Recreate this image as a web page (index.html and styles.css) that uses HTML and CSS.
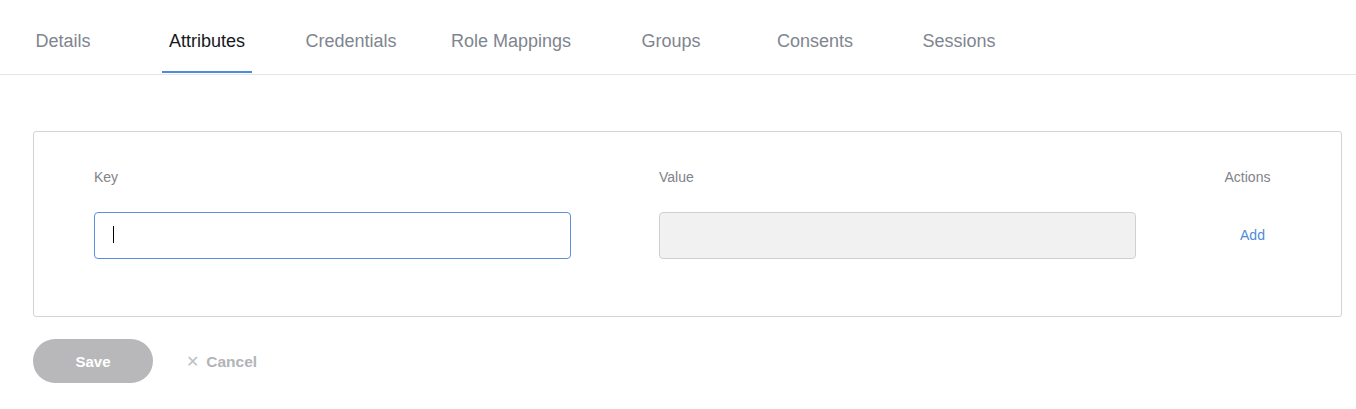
FILE: index.html
```html
<!DOCTYPE html>
<html lang="en">

<head>
    <meta charset="UTF-8">
    <meta name="viewport" content="width=device-width, initial-scale=1.0">
    <title>User Attributes</title>
    <link rel="stylesheet" href="styles.css">
</head>

<body>
    <header>
        <nav class="tab-bar">
            <a class="tab" href="#">Details</a>
            <a class="tab active" href="#">Attributes</a>
            <a class="tab" href="#">Credentials</a>
            <a class="tab wide" href="#">Role Mappings</a>
            <a class="tab" href="#">Groups</a>
            <a class="tab" href="#">Consents</a>
            <a class="tab" href="#">Sessions</a>
        </nav>
    </header>
    <main class="content">
        <form class="attributes-form">
            <div class="attributes-card">
                <div class="attr-grid">
                    <label class="col-head" for="attr_key">Key</label>
                    <label class="col-head" for="attr_value">Value</label>
                    <span class="col-head actions">Actions</span>

                    <div class="field-wrap">
                        <input class="field focused" type="text" id="attr_key">
                        <span class="caret"></span>
                    </div>
                    <input class="field" type="text" id="attr_value" disabled>
                    <div class="actions">
                        <button type="button" class="link-btn">Add</button>
                    </div>
                </div>
            </div>
            <div class="form-buttons">
                <button type="submit" class="save-btn" disabled>Save</button>
                <button type="button" class="cancel-btn"><span class="cancel-x">&#x2715;</span> Cancel</button>
            </div>
        </form>
    </main>
</body>

</html>
```

FILE: styles.css
```css
body {
    margin: 0px;
    padding: 0px;
    font-family: 'Liberation Sans', Arial, sans-serif;
    background: #fff;
}

.tab-bar {
    display: flex;
    margin-left: -9px;
    padding-bottom: 1px;
    border-bottom: 1px solid #e6e6e6;
}

.tab {
    flex: 0 0 144px;
    display: flex;
    justify-content: center;
    box-sizing: border-box;
    height: 73px;
    padding-top: 31px;
    font-size: 18px;
    line-height: 20px;
    color: #80858f;
    text-decoration: none;
}

.tab.wide {
    flex-basis: 176px;
}

/* active tab: dark label + 2px blue underline under the text */
.tab.active {
    color: #16181c;
    background: linear-gradient(#4f8bdb, #4f8bdb) no-repeat center bottom / 90px 2px;
}

.content {
    padding: 56px 14px 0px 33px;
}

.attributes-card {
    border: 1px solid #d3d3d3;
    border-radius: 3px;
    padding: 37px 70px 57px 60px;
}

.attr-grid {
    display: grid;
    grid-template-columns: 477px 477px 1fr;
    column-gap: 88px;
    row-gap: 27px;
    align-items: center;
}

.col-head {
    font-size: 14px;
    line-height: 16px;
    color: #80838a;
}

.actions {
    text-align: center;
}

.field-wrap {
    position: relative;
}

.field {
    box-sizing: border-box;
    width: 100%;
    height: 47px;
    padding: 0px 18px;
    border: 1px solid #d0d0d0;
    border-radius: 4px;
    font-family: inherit;
    font-size: 15px;
    outline: none;
}

.field.focused {
    border-color: #5a90dc;
}

.field:disabled {
    background: #f1f1f1;
}

/* text cursor sitting in the focused key field */
.caret {
    position: absolute;
    left: 19px;
    top: 14px;
    width: 1px;
    height: 17px;
    background: #000;
}

.link-btn {
    border: none;
    background: none;
    padding: 0px 0px 2px 10px;
    font-family: inherit;
    font-size: 14px;
    color: #4f8bdb;
    cursor: pointer;
}

.form-buttons {
    display: flex;
    align-items: center;
    gap: 33px;
    margin-top: 22px;
}

.save-btn {
    width: 120px;
    height: 44px;
    border: none;
    border-radius: 22px;
    background: #b8b8ba;
    color: #fff;
    font-family: inherit;
    font-size: 15px;
    font-weight: bold;
}

.cancel-btn {
    border: none;
    background: none;
    padding: 0px;
    font-family: inherit;
    font-size: 15.5px;
    font-weight: bold;
    color: #b2b4b8;
}

.cancel-x {
    font-weight: normal;
    font-size: 16px;
    color: #bdbfc3;
    margin-right: 3px;
}
```
